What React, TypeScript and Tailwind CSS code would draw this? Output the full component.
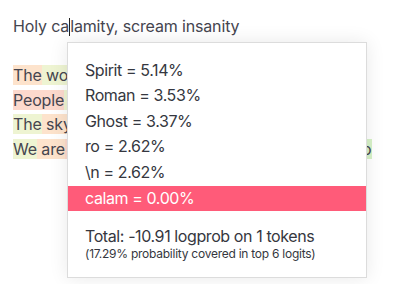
import React from "react";

const TOKENS = [
  { label: "Spirit", pct: "5.14%" },
  { label: "Roman", pct: "3.53%" },
  { label: "Ghost", pct: "3.37%" },
  { label: "ro", pct: "2.62%" },
  { label: "\\n", pct: "2.62%" },
];

const ORANGE = "bg-[#fde3cc]";
const GREEN = "bg-[#eef4d2]";
const PINK = "bg-[#fcd9cd]";

export default function App() {
  return (
    <div className="relative w-[401px] h-[284px] overflow-hidden bg-white font-['Inter',sans-serif] text-[16px] leading-[24.5px] text-[#45454f]">
      <div className="pl-[13px] pt-[14px] whitespace-nowrap tracking-[-0.15px]">
        <p>
          Holy ca
          <span className="inline-block w-px h-[18px] bg-[#222] align-[-4px]" />
          lamity, scream insanity
        </p>
        <p>&nbsp;</p>
        <p>
          <span className={ORANGE}>The</span>
          <span className={GREEN}> world is alive</span>
        </p>
        <p>
          <span className={PINK}>People</span>
          <span className={GREEN}> are</span>
        </p>
        <p>
          <span className={GREEN}>The</span>
          <span className={ORANGE}> sky is</span>
        </p>
        <p>
          <span className={GREEN}>We</span>
          <span className={ORANGE}> are</span>
          <span className={PINK}> the ones who walk the path of the night</span>
          <span className="bg-[#d7f2c8]">o</span>
        </p>
      </div>

      <div className="absolute left-[67px] top-[42px] w-[300px] h-[236px] border border-[#dcdcdc] bg-white shadow-[0_0_18px_rgba(0,0,0,0.09)] text-[#353740] tracking-[-0.4px]">
        <div className="pt-[15px]">
          {TOKENS.map((t) => (
            <div key={t.label} className="h-[25.4px] pl-[17px] leading-[25.4px]">
              {t.label} = {t.pct}
            </div>
          ))}
          <div className="h-[25px] pl-[17px] leading-[25px] bg-[#ff5b79] text-white mt-[1px]">
            calam = 0.00%
          </div>
        </div>
        <div className="pl-[17px] pt-[15px]">
          <div className="leading-[20px]">Total: -10.91 logprob on 1 tokens</div>
          <div className="text-[12px] leading-[15px] tracking-[-0.25px]">
            (17.29% probability covered in top 6 logits)
          </div>
        </div>
      </div>
    </div>
  );
}
